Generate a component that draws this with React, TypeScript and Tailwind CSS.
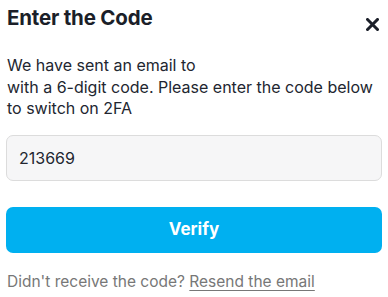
import React from "react";

export default function App() {
  return (
    <div
      className="w-[388px] h-[297px] bg-white px-[6px] text-[#1b1f29]"
      style={{ fontFamily: "Inter, 'Noto Sans', sans-serif" }}
    >
      <div className="flex justify-between items-start pt-[4px]">
        <h1 className="text-[20.5px] font-bold leading-[28px] pl-[1px] tracking-[-0.2px]">Enter the Code</h1>
        <svg width="13" height="13" viewBox="0 0 13 13" className="mt-[14px] mr-[3px]">
          <path d="M1.5 1.5 L11.5 11.5 M11.5 1.5 L1.5 11.5" stroke="#1b1f29" strokeWidth="3" strokeLinecap="square" />
        </svg>
      </div>
      <p className="mt-[23px] text-[16px] leading-[21.5px] pl-[1px] text-[#222630]">
        We have sent an email to
        <br />
        with a 6-digit code. Please enter the code below
        <br />
        to switch on 2FA
      </p>
      <div className="mt-[15px] h-[46px] rounded-[7px] border border-[#dcdcdc] bg-[#f6f6f7] flex items-center px-[12px] text-[16px] text-[#222630]">
        213669
      </div>
      <button className="mt-[26px] w-full h-[46px] rounded-[7px] bg-[#00b0f0] text-white font-bold text-[17px] flex items-center justify-center">
        Verify
      </button>
      <p className="mt-[18px] text-[15.5px] leading-[22px] text-[#777777] pl-[1px]">
        Didn't receive the code? <span className="underline underline-offset-[3px]">Resend the email</span>
      </p>
    </div>
  );
}
